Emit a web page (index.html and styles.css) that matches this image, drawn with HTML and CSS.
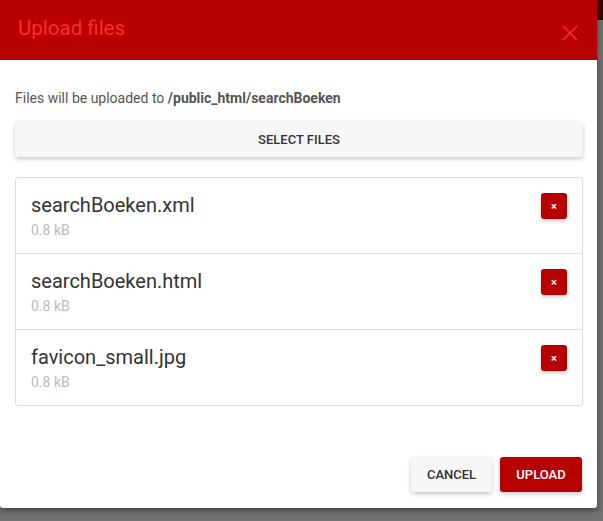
FILE: index.html
```html
<!DOCTYPE html>
<html>
<head>
<meta charset="utf-8">
<link rel="stylesheet" href="styles.css">
</head>
<body>
<div class="dialog">
  <div class="header">
    <h1 class="title">Upload files</h1>
    <svg class="close" width="16" height="16" viewBox="0 0 16 16"><path d="M1 1L15 15M15 1L1 15" stroke="#ff2a2a" stroke-width="1.6" fill="none"/></svg>
  </div>
  <div class="body">
    <p class="dest">Files will be uploaded to <b>/public_html/searchBoeken</b></p>
    <button class="btn btn-light select">SELECT FILES</button>
    <ul class="files">
      <li class="file">
        <div class="info"><div class="name">searchBoeken.xml</div><div class="size">0.8 kB</div></div>
        <button class="del">&#215;</button>
      </li>
      <li class="file">
        <div class="info"><div class="name">searchBoeken.html</div><div class="size">0.8 kB</div></div>
        <button class="del">&#215;</button>
      </li>
      <li class="file">
        <div class="info"><div class="name">favicon_small.jpg</div><div class="size">0.8 kB</div></div>
        <button class="del">&#215;</button>
      </li>
    </ul>
  </div>
  <div class="footer">
    <button class="btn btn-light cancel">CANCEL</button>
    <button class="btn btn-red upload">UPLOAD</button>
  </div>
</div>
</body>
</html>
```
FILE: styles.css
```css
html, body { margin: 0; padding: 0; }
body {
  width: 603px;
  height: 521px;
  overflow: hidden;
  background: linear-gradient(#3c0000 0, #3c0000 20px, #727272 20px);
  font-family: Roboto, "Liberation Sans", sans-serif;
}
.dialog {
  width: 597px;
  height: 508px;
  background: #fff;
  border-radius: 0 0 3px 3px;
  box-shadow: 0 2px 6px rgba(0,0,0,0.5);
  display: flex;
  flex-direction: column;
}
.header {
  height: 60px;
  background: #b70000;
  display: flex;
  align-items: center;
  justify-content: space-between;
  padding: 0 19px 0 18px;
}
.title {
  margin: 0 0 4px;
  font-size: 20.5px;
  font-weight: 400;
  color: #ff2b2b;
}
.close { margin-top: 5px; }
.body {
  padding: 0 14px 0 15px;
  flex: 1;
}
.dest {
  margin: 30px 0 15px;
  font-size: 14px;
  line-height: 16px;
  color: #555;
}
.dest b { font-weight: 700; }
.btn {
  font-family: Roboto, "Liberation Sans", sans-serif;
  font-size: 13px;
  font-weight: 500;
  border: none;
  border-radius: 3px;
  height: 35px;
  letter-spacing: 0;
  cursor: pointer;
}
.btn-light {
  background: #f7f7f7;
  color: #333;
  box-shadow: 0 2px 4px rgba(0,0,0,0.22);
}
.btn-red {
  background: #b70000;
  color: #fff;
  box-shadow: 0 2px 4px rgba(0,0,0,0.22);
}
.select {
  display: block;
  width: 100%;
  margin: 0;
  height: 36px;
}
.files {
  list-style: none;
  margin: 20px 0 0;
  padding: 0;
  border: 1px solid #ddd;
  border-radius: 3px;
}
.file {
  height: 76px;
  display: flex;
  align-items: flex-start;
  justify-content: space-between;
  padding: 0 15px 0 15px;
  border-top: 1px solid #ddd;
  box-sizing: border-box;
}
.file:first-child { border-top: none; height: 75px; }
.info { padding-top: 15px; }
.name {
  font-size: 20px;
  line-height: 24px;
  color: #333;
}
.size {
  font-size: 14px;
  line-height: 16px;
  color: #bbb;
  margin-top: 5px;
}
.del {
  margin-top: 15px;
  width: 26px;
  height: 26px;
  border: none;
  border-radius: 3px;
  background: #b70000;
  color: #fff;
  font-size: 11px;
  font-weight: 700;
  padding: 0;
  font-family: Roboto, "Liberation Sans", sans-serif;
  box-shadow: 0 2px 4px rgba(0,0,0,0.2);
}
.footer {
  display: flex;
  justify-content: flex-end;
  gap: 8px;
  padding: 0 15px 16px;
}
.cancel { padding: 0 15px; width: 81px; }
.upload { padding: 0; width: 82px; }
```
